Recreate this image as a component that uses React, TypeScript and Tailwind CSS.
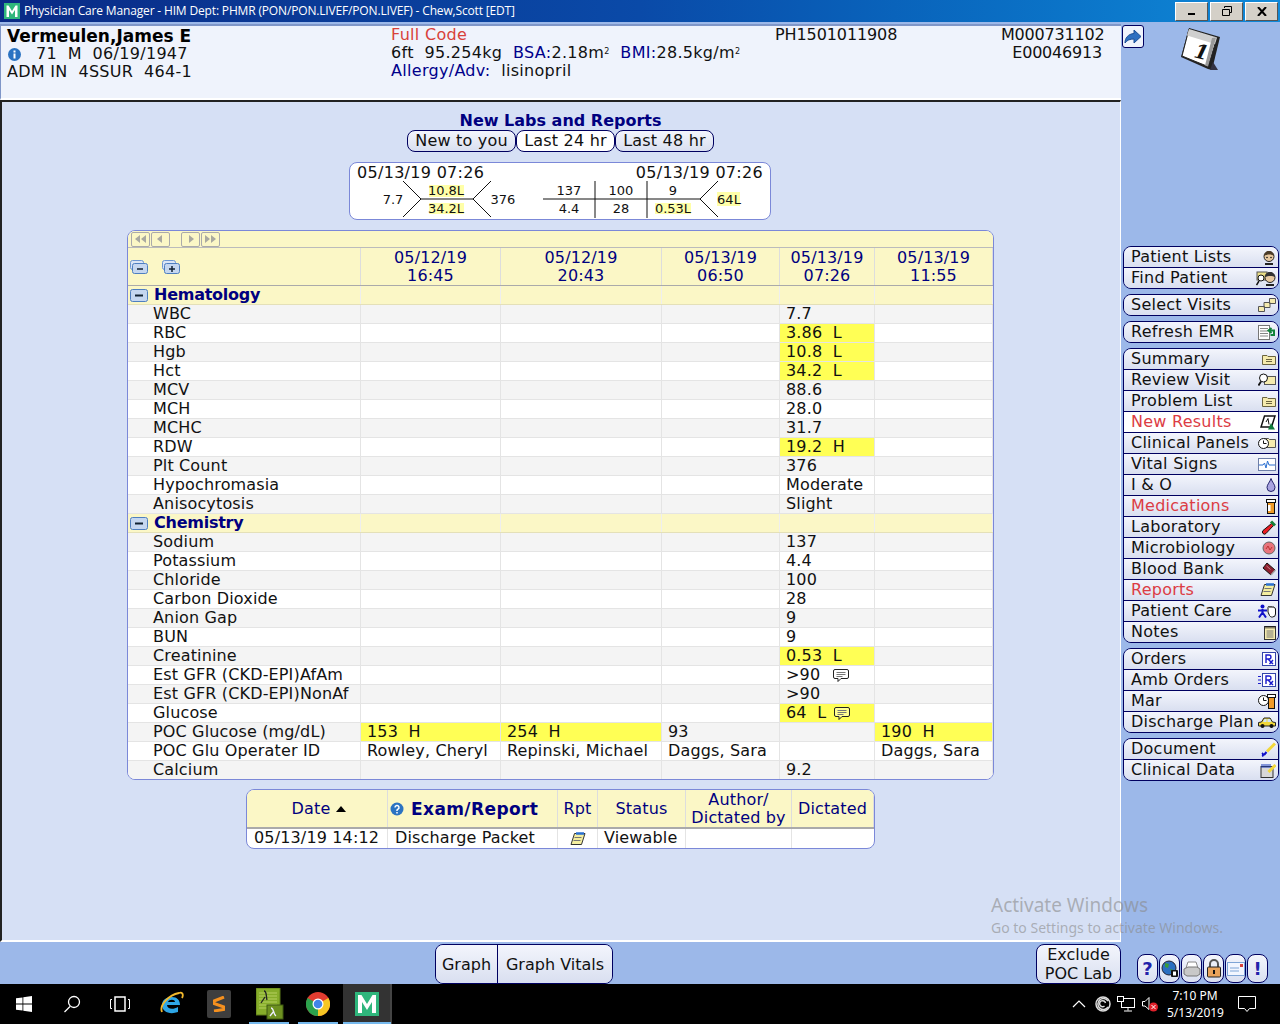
import React from "react"

const ui = { fontFamily: '"DejaVu Sans", Verdana, sans-serif' }

type Cell = { t: string; hl?: boolean; note?: boolean }
type Row = { label: string; cells?: Record<number, Cell>; section?: boolean }

const v = (t: string, hl = false, note = false): Cell => ({ t, hl, note })

const rows: Row[] = [
    { label: "Hematology", section: true },
    { label: "WBC", cells: { 3: v("7.7") } },
    { label: "RBC", cells: { 3: v("3.86  L", true) } },
    { label: "Hgb", cells: { 3: v("10.8  L", true) } },
    { label: "Hct", cells: { 3: v("34.2  L", true) } },
    { label: "MCV", cells: { 3: v("88.6") } },
    { label: "MCH", cells: { 3: v("28.0") } },
    { label: "MCHC", cells: { 3: v("31.7") } },
    { label: "RDW", cells: { 3: v("19.2  H", true) } },
    { label: "Plt Count", cells: { 3: v("376") } },
    { label: "Hypochromasia", cells: { 3: v("Moderate") } },
    { label: "Anisocytosis", cells: { 3: v("Slight") } },
    { label: "Chemistry", section: true },
    { label: "Sodium", cells: { 3: v("137") } },
    { label: "Potassium", cells: { 3: v("4.4") } },
    { label: "Chloride", cells: { 3: v("100") } },
    { label: "Carbon Dioxide", cells: { 3: v("28") } },
    { label: "Anion Gap", cells: { 3: v("9") } },
    { label: "BUN", cells: { 3: v("9") } },
    { label: "Creatinine", cells: { 3: v("0.53  L", true) } },
    { label: "Est GFR (CKD-EPI)AfAm", cells: { 3: v(">90", false, true) } },
    { label: "Est GFR (CKD-EPI)NonAf", cells: { 3: v(">90") } },
    { label: "Glucose", cells: { 3: v("64  L", true, true) } },
    { label: "POC Glucose (mg/dL)", cells: { 0: v("153  H", true), 1: v("254  H", true), 2: v("93"), 4: v("190  H", true) } },
    { label: "POC Glu Operater ID", cells: { 0: v("Rowley, Cheryl"), 1: v("Repinski, Michael"), 2: v("Daggs, Sara"), 4: v("Daggs, Sara") } },
    { label: "Calcium", cells: { 3: v("9.2") } },
]

const colClass = ["w-[140px]", "w-[161px]", "w-[118px]", "w-[95px]", "w-[118px]"]

const heads = [
    ["05/12/19", "16:45"],
    ["05/12/19", "20:43"],
    ["05/13/19", "06:50"],
    ["05/13/19", "07:26"],
    ["05/13/19", "11:55"],
]

const Note = ({ near }: { near?: boolean }) => (
    <svg width="18" height="15" viewBox="0 0 18 15" className={`shrink-0 ${near ? "ml-[7px]" : "ml-[12px]"}`}>
        <path d="M3 1.500h12a1.500 1.500 0 0 1 1.500 1.500v6a1.500 1.500 0 0 1-1.500 1.500H9L6 13.500v-3H3A1.500 1.500 0 0 1 1.500 9V3A1.500 1.500 0 0 1 3 1.500z" fill="#fff" fillOpacity="0.35" stroke="#222" />
        <path d="M4.500 4.500h9M4.500 6.500h9M4.500 8.500h6" stroke="#777" />
    </svg>
)

const Folder = () => (
    <svg width="14" height="12" viewBox="0 0 14 12">
        <path d="M.5 2.500h4.500l1 1h7.500v8H.5z" fill="#f5ebae" stroke="#6b6440" />
        <path d="M4 6.500h6M4 8.500h6" stroke="#6b6440" />
    </svg>
)

const Report = () => (
    <svg width="16" height="14" viewBox="0 0 16 14">
        <path d="M4.500 1.500h10.500l-3.500 11H1z" fill="#f4eea0" stroke="#333" />
        <path d="M6 1.500h8" stroke="#2a6fd0" strokeWidth="2.500" />
        <path d="M4.500 5.500h7M3.500 8.500h7" stroke="#777" />
    </svg>
)

const sideIcons: Record<string, React.ReactNode> = {
    person: (
        <svg width="14" height="15" viewBox="0 0 14 15">
            <circle cx="7" cy="6.500" r="5" fill="#e8c9a0" stroke="#222" />
            <path d="M2 6a5 5 0 0 1 10 0c-2-2-7-2-10 0z" fill="#4c3c28" />
            <circle cx="5" cy="7.500" r=".8" fill="#111" />
            <circle cx="9" cy="7.500" r=".8" fill="#111" />
            <path d="M3 14h8" stroke="#222" strokeWidth="2" />
        </svg>
    ),
    find: (
        <svg width="20" height="15" viewBox="0 0 20 15">
            <rect x="1" y="1" width="10" height="8" fill="#e9dd86" stroke="#555" />
            <circle cx="5" cy="7" r="3" fill="#fff" stroke="#111" />
            <path d="M3 10l-2.500 4" stroke="#111" strokeWidth="1.500" />
            <circle cx="14" cy="6.500" r="5" fill="#e8c9a0" stroke="#222" />
            <path d="M9 6a5 5 0 0 1 10 0c-2-1.500-7-1.500-10 0z" fill="#333" />
            <path d="M10 14h8" stroke="#222" strokeWidth="2" />
        </svg>
    ),
    visits: (
        <svg width="18" height="14" viewBox="0 0 18 14">
            <path d="M.5 8.500h6v5h-6zM6 4.500h6v5H6zM11.500 .5h6v5h-6z" fill="#f5ebae" stroke="#555" />
        </svg>
    ),
    refresh: (
        <svg width="18" height="15" viewBox="0 0 18 15">
            <rect x=".5" y=".5" width="11" height="14" fill="#fff" stroke="#777" />
            <path d="M2 3.500h8M2 6h8M2 8.500h8M2 11h8" stroke="#888" />
            <path d="M11 5.500h5v4.500h-3.500M13.500 3l-3 2.500 3 2.500" fill="none" stroke="#12843a" strokeWidth="2" />
        </svg>
    ),
    folder: <Folder />,
    review: (
        <svg width="18" height="14" viewBox="0 0 18 14">
            <rect x="6.500" y="3.500" width="11" height="8" fill="#f5ebae" stroke="#555" />
            <circle cx="5.500" cy="5" r="4" fill="#fff" stroke="#111" />
            <path d="M3 8.500l-2.500 4" stroke="#111" strokeWidth="1.800" />
        </svg>
    ),
    newres: (
        <svg width="16" height="15" viewBox="0 0 16 15">
            <path d="M4.500 1h10.500l-3.500 11H1z" fill="#fff" stroke="#111" strokeWidth="1.500" />
            <path d="M6 7l2-3.500 1 6" stroke="#111" fill="none" />
            <path d="M11 8l4 6.500H8z" fill="#0f7a3a" />
        </svg>
    ),
    panels: (
        <svg width="18" height="14" viewBox="0 0 18 14">
            <path d="M6.500 2.500h4l1 1h6v8h-11z" fill="#f5ebae" stroke="#555" />
            <circle cx="5.500" cy="7.500" r="5" fill="#fff" stroke="#111" />
            <path d="M5.500 4.500v3h3" fill="none" stroke="#111" />
        </svg>
    ),
    vitals: (
        <svg width="18" height="13" viewBox="0 0 18 13">
            <rect x=".5" y=".5" width="17" height="12" fill="#fff" stroke="#6d7ea8" />
            <path d="M1 7h4l1.500-2 1.500 5 1.500-7 1.500 4h6" fill="none" stroke="#2a6fd0" />
        </svg>
    ),
    drop: (
        <svg width="10" height="14" viewBox="0 0 10 14">
            <path d="M5 .5C6 4 9 6.500 9 9.500a4 4 0 0 1-8 0C1 6.500 4 4 5 .5z" fill="#a9a4e0" stroke="#22226a" />
        </svg>
    ),
    meds: (
        <svg width="10" height="15" viewBox="0 0 10 15">
            <rect x=".5" y=".5" width="9" height="3" fill="#fff" stroke="#111" />
            <rect x="1.500" y="3.500" width="7" height="11" fill="#f09a28" stroke="#111" />
            <rect x="2" y="6" width="2.500" height="6" fill="#fff" />
        </svg>
    ),
    lab: (
        <svg width="14" height="15" viewBox="0 0 14 15">
            <path d="M9.500 3.500l2 2-7.500 8a2 2 0 0 1-3-3z" fill="#ea1c24" stroke="#111" />
            <path d="M9 1.500l4 4" stroke="#16803a" strokeWidth="3" />
        </svg>
    ),
    micro: (
        <svg width="14" height="14" viewBox="0 0 14 14">
            <circle cx="7" cy="7" r="6" fill="#e9747c" stroke="#666" />
            <path d="M4 8l2-3 2 4 2-3" fill="none" stroke="#b33" />
        </svg>
    ),
    blood: (
        <svg width="14" height="14" viewBox="0 0 14 14">
            <path d="M5 1l8 7-4 5-8-7z" fill="#8e1f2e" stroke="#111" />
            <path d="M4.500 4l4 3.500" stroke="#c9808a" />
            <path d="M9 13l4.500-5" stroke="#aaa" strokeWidth="1.500" />
        </svg>
    ),
    report: <Report />,
    care: (
        <svg width="18" height="14" viewBox="0 0 18 14">
            <circle cx="4.500" cy="2.500" r="2" fill="#1010c8" />
            <path d="M0 6.500h9M4.500 5v4M4.500 8.500l-3.500 5M4.500 8.500l3.500 5" stroke="#1010c8" strokeWidth="2" />
            <path d="M10 8V3.500a1 1 0 0 1 2 0a1 1 0 0 1 2 0a1 1 0 0 1 2 0.500a1 1 0 0 1 1.500 .5V10a3 3 0 0 1-3 3h-1a3 3 0 0 1-2-1.500z" fill="#fff" stroke="#111" />
        </svg>
    ),
    notes: (
        <svg width="12" height="15" viewBox="0 0 12 15">
            <rect x=".5" y="1.500" width="11" height="13" fill="#f5ebae" stroke="#333" />
            <path d="M2 1v2.500M4 1v2.500M6 1v2.500M8 1v2.500M10 1v2.500" stroke="#111" />
            <path d="M2.500 6h7M2.500 8h7M2.500 10h7M2.500 12h7" stroke="#777" />
        </svg>
    ),
    rx: (
        <svg width="14" height="14" viewBox="0 0 14 14">
            <rect x=".5" y=".5" width="13" height="13" fill="#fff" stroke="#3344aa" />
            <path d="M4 11V3h3a2 2 0 0 1 0 4H4M6 7l5 5M11 8l-3.500 4" fill="none" stroke="#1a1acc" strokeWidth="1.400" />
        </svg>
    ),
    amb: (
        <svg width="18" height="14" viewBox="0 0 18 14">
            <path d="M0 3.500h3M0 7h3M0 10.500h3" stroke="#1a1acc" />
            <rect x="4.500" y=".5" width="13" height="13" fill="#fff" stroke="#3344aa" />
            <path d="M8 11V3h3a2 2 0 0 1 0 4H8M10 7l5 5M15 8l-3.500 4" fill="none" stroke="#1a1acc" strokeWidth="1.400" />
        </svg>
    ),
    mar: (
        <svg width="18" height="15" viewBox="0 0 18 15">
            <circle cx="5.500" cy="6.500" r="5" fill="#fff" stroke="#111" />
            <path d="M5.500 3.500v3h3" fill="none" stroke="#111" />
            <rect x="9.500" y=".5" width="8" height="3" fill="#fff" stroke="#111" />
            <rect x="10.500" y="3.500" width="6" height="11" fill="#f09a28" stroke="#111" />
        </svg>
    ),
    car: (
        <svg width="18" height="13" viewBox="0 0 18 13">
            <path d="M.5 6.500l3-.5 2.500-4h6l2.500 4 3 .5v3.500h-17z" fill="#f2d83a" stroke="#222" />
            <path d="M6.500 3h2v3h-3.500zM9.500 3h2.500l1.500 3h-4z" fill="#cfe4f5" />
            <circle cx="4.500" cy="10" r="2" fill="#111" />
            <circle cx="13.500" cy="10" r="2" fill="#111" />
        </svg>
    ),
    pen: (
        <svg width="15" height="15" viewBox="0 0 15 15">
            <path d="M14 1.500l-8 8" stroke="#f2d83a" strokeWidth="3" />
            <path d="M5.500 10L3 13M1 11c1.500 1 1.500 2.500 0 3" stroke="#1010c8" strokeWidth="2" fill="none" />
        </svg>
    ),
    data: (
        <svg width="16" height="15" viewBox="0 0 16 15">
            <rect x="1" y="3.500" width="12" height="11" fill="#d8d8d8" stroke="#333" />
            <path d="M2 1v4M4 1v4M6 1v4M8 1v4M10 1v4" stroke="#1a3cbb" />
            <path d="M15.500 2l-7 7" stroke="#f2d83a" strokeWidth="3" />
        </svg>
    ),
}

const navGroups: { t: string; i: string; red?: boolean; active?: boolean }[][] = [
    [{ t: "Patient Lists", i: "person" }, { t: "Find Patient", i: "find" }],
    [{ t: "Select Visits", i: "visits" }],
    [{ t: "Refresh EMR", i: "refresh" }],
    [
        { t: "Summary", i: "folder" },
        { t: "Review Visit", i: "review" },
        { t: "Problem List", i: "folder" },
        { t: "New Results", i: "newres", red: true, active: true },
        { t: "Clinical Panels", i: "panels" },
        { t: "Vital Signs", i: "vitals" },
        { t: "I & O", i: "drop" },
        { t: "Medications", i: "meds", red: true },
        { t: "Laboratory", i: "lab" },
        { t: "Microbiology", i: "micro" },
        { t: "Blood Bank", i: "blood" },
        { t: "Reports", i: "report", red: true },
        { t: "Patient Care", i: "care" },
        { t: "Notes", i: "notes" },
    ],
    [
        { t: "Orders", i: "rx" },
        { t: "Amb Orders", i: "amb" },
        { t: "Mar", i: "mar" },
        { t: "Discharge Plan", i: "car" },
    ],
    [{ t: "Document", i: "pen" }, { t: "Clinical Data", i: "data" }],
]

const btnBg = "bg-gradient-to-b from-[#f3f5fc] to-[#d9dff0]"

const TitleBar = () => (
    <div className="h-[22px] flex items-center bg-gradient-to-r from-[#0a2a86] via-[#0a4aa8] to-[#1089d8] shrink-0">
        <svg width="16" height="16" viewBox="0 0 16 16" className="ml-[4px]">
            <rect width="16" height="16" fill="#2fb67c" />
            <path d="M2.500 14V2.500h2L8 8l3.500-5.500h2V14h-2.500V7L8 11.500 5 7v7z" fill="#fff" />
        </svg>
        <span className="ml-[4px] text-[12px] text-white tracking-[-0.16px]" style={{ fontFamily: '"Open Sans", sans-serif' }}>
            Physician Care Manager - HIM Dept: PHMR (PON/PON.LIVEF/PON.LIVEF) - Chew,Scott [EDT]
        </span>
        <div className="ml-auto mr-[2px] flex gap-[2px]">
            {["min", "max", "close"].map(k => (
                <div key={k} className="w-[33px] h-[19px] bg-[#d4d0c8] border border-t-white border-l-white border-r-[#555] border-b-[#555] flex items-center justify-center">
                    {k === "min" && <div className="w-[7px] h-[2px] bg-black mt-[6px]" />}
                    {k === "max" && (
                        <svg width="12" height="12" viewBox="0 0 12 12">
                            <path d="M3.500 3V1.500h7v6H8M1.500 4.500h7v6h-7z" fill="none" stroke="#000" />
                        </svg>
                    )}
                    {k === "close" && (
                        <svg width="10" height="9" viewBox="0 0 10 9">
                            <path d="M1 0l8 9M9 0l-8 9" stroke="#000" strokeWidth="2" />
                        </svg>
                    )}
                </div>
            ))}
        </div>
    </div>
)

const PatientHeader = () => (
    <div className="h-[76px] shrink-0 bg-[#eff3fc] border-t-2 border-[#7f96c8] border-b-2 border-b-white border-l border-l-[#7f96c8] flex text-[16px] leading-[18px] text-[#111] box-border">
        <div className="w-[390px] pl-[6px] pt-[1px] tracking-[0.3px]">
            <div className="font-bold text-[#000] text-[17px] tracking-normal leading-[18px]">Vermeulen,James E</div>
            <div className="flex items-center whitespace-pre">
                <svg width="15" height="15" viewBox="0 0 15 15" className="mr-[14px]">
                    <circle cx="7.500" cy="7.500" r="6.500" fill="#2b73c2" />
                    <rect x="6.500" y="6.500" width="2" height="5" fill="#fff" />
                    <rect x="6.500" y="3.500" width="2" height="2" fill="#fff" />
                </svg>
                71  M  06/19/1947
            </div>
            <div className="whitespace-pre">ADM IN  4SSUR  464-1</div>
        </div>
        <div className="w-[384px] tracking-[0.3px]">
            <div className="text-[#d8413a]">Full Code</div>
            <div className="whitespace-pre">
                6ft  95.254kg  <span className="text-[#00008b]">BSA:</span>2.18m<sup className="text-[8px]">2</sup>  <span className="text-[#00008b]">BMI:</span>28.5kg/m<sup className="text-[8px]">2</sup>
            </div>
            <div className="whitespace-pre"><span className="text-[#00008b]">Allergy/Adv:</span>  lisinopril</div>
        </div>
        <div className="w-[226px] tracking-[-0.1px]">PH1501011908</div>
        <div className="w-[101px] text-right tracking-[-0.2px]">
            <div>M000731102</div>
            <div>E00046913</div>
        </div>
    </div>
)

const Fishbone = () => (
    <svg width="420" height="38" viewBox="0 0 420 38" className="block" fontSize="13" fontFamily='"DejaVu Sans", sans-serif' fill="#111" textAnchor="middle">
        <rect x="79" y="4" width="35" height="12" fill="#ffffa8" />
        <rect x="79" y="22" width="35" height="11" fill="#ffffa8" />
        <rect x="305" y="22" width="36" height="11" fill="#ffffa8" />
        <rect x="367" y="11" width="23" height="14" fill="#ffffa8" />
        <path d="M53 0l18 18M53 36l18-18M71 18h52M123 18l18-18M123 18l18 18" fill="none" stroke="#111" />
        <path d="M193 18h157M245 0v37M297 0v37M350 18l18-18M350 18l18 18" fill="none" stroke="#111" />
        <text x="43" y="23">7.7</text>
        <text x="96" y="14">10.8L</text>
        <text x="96" y="32">34.2L</text>
        <text x="153" y="23">376</text>
        <text x="219" y="14">137</text>
        <text x="219" y="32">4.4</text>
        <text x="271" y="14">100</text>
        <text x="271" y="32">28</text>
        <text x="323" y="14">9</text>
        <text x="323" y="32">0.53L</text>
        <text x="379" y="23">64L</text>
    </svg>
)

const LabsGrid = () => (
    <div className="ml-[125px] w-[867px] mt-[10px] border border-[#7b88d8] rounded-lg overflow-hidden bg-white text-[16px] text-[#111] tracking-[0.15px]">
        <div className="h-[17px] bg-[#fbf7c6] border-b border-[#bbb] flex items-center pl-[3px] gap-[1px]">
            {["M8 2L3 6l5 4zM14 2L9 6l5 4z", "M10 2L5 6l5 4z"].map(d => (
                <svg key={d} width="17" height="13" viewBox="0 0 17 13" className="border border-[#aaa] box-content rounded-[2px]"><path d={d} fill="#a9a9a0" /></svg>
            ))}
            <div className="w-[9px]" />
            {["M7 2l5 4-5 4z", "M3 2l5 4-5 4zM9 2l5 4-5 4z"].map(d => (
                <svg key={d} width="17" height="13" viewBox="0 0 17 13" className="border border-[#aaa] box-content rounded-[2px]"><path d={d} fill="#a9a9a0" /></svg>
            ))}
        </div>
        <div className="flex h-[38px] bg-[#fbf7c6] border-b border-[#aaa] text-[#000080] leading-[18px]">
            <div className="w-[233px] border-r border-[#ddd] flex items-center gap-[12px] pl-[1px] pt-[2px]">
                {["M5 9h6", "M5 9h6M8 6v6"].map(d => (
                    <svg key={d} width="20" height="15" viewBox="0 0 20 15">
                        <rect x="1.500" y=".5" width="13" height="9" rx="2" fill="#dbe6f6" stroke="#6d97d2" />
                        <rect x="3.500" y="3.500" width="15" height="10" rx="2" fill="#c5d7f0" stroke="#4e7fc0" />
                        <path d={d} transform="translate(3,0)" stroke="#123" strokeWidth="1.500" />
                    </svg>
                ))}
            </div>
            {heads.map((h, i) => (
                <div key={i} className={`${colClass[i]} shrink-0 border-r border-[#ddd] text-center pt-[1px]`}>
                    <div>{h[0]}</div>
                    <div>{h[1]}</div>
                </div>
            ))}
        </div>
        {rows.map((r, idx) => {
            if (r.section) {
                return (
                    <div key={r.label} className="flex h-[19px] bg-[#fbf7c6] border-b border-[#e4e0b8]">
                        <div className="w-[233px] flex items-center border-r border-[#eee] pl-[2px] font-bold text-[#000080] text-[16px] tracking-[-0.25px]">
                            <svg width="18" height="13" viewBox="0 0 18 13" className="mr-[6px]">
                                <rect x=".5" y=".5" width="17" height="12" rx="2" fill="#c5d7f0" stroke="#4e7fc0" />
                                <path d="M5 6.500h8" stroke="#123" strokeWidth="2" />
                            </svg>
                            {r.label}
                        </div>
                        {colClass.map((c, i) => <div key={i} className={`${c} shrink-0 border-r border-[#eee]`} />)}
                    </div>
                )
            }
            const prevSection = rows.slice(0, idx).reverse().findIndex(x => x.section)
            const odd = prevSection % 2 === 0
            return (
                <div key={r.label} className={`flex h-[19px] last:h-[18px] leading-[18px] border-b border-[#e4e4e4] last:border-b-0 ${odd ? "bg-[#f4f4f4]" : "bg-white"}`}>
                    <div className="w-[233px] pl-[25px] border-r border-[#e4e4e4] whitespace-nowrap">{r.label}</div>
                    {colClass.map((c, i) => {
                        const cell = r.cells?.[i]
                        return (
                            <div key={i} className={`${c} shrink-0 border-r border-[#e4e4e4] pl-[6px] flex items-center whitespace-pre ${cell?.hl ? "bg-[#ffff55]" : ""}`}>
                                {cell?.t}
                                {cell?.note && <Note near={cell.hl} />}
                            </div>
                        )
                    })}
                </div>
            )
        })}
    </div>
)

const reportHead = [
    { w: "w-[141px]", t: "Date" },
    { w: "w-[170px]", t: "" },
    { w: "w-[40px]", t: "Rpt" },
    { w: "w-[88px]", t: "Status" },
    { w: "w-[106px]", t: "Author/ Dictated by" },
    { w: "w-[82px]", t: "Dictated" },
]

const ReportsTable = () => (
    <div className="ml-[244px] w-[629px] mt-[9px] border border-[#7b88d8] rounded-lg overflow-hidden bg-white text-[16px] tracking-[0.15px]">
        <div className="flex h-[39px] bg-[#fbf7c6] border-b-2 border-[#aaa] text-[#000080] leading-[18px] text-center">
            {reportHead.map((h, i) => (
                <div key={i} className={`${h.w} border-r border-[#ddd] flex items-center ${i === 1 ? "justify-start pl-[2px]" : "justify-center"}`}>
                    {i === 0 && <span className="flex items-center pl-[4px]">Date<svg width="10" height="6" viewBox="0 0 10 6" className="ml-[6px]"><path d="M5 0l5 6H0z" fill="#000" /></svg></span>}
                    {i === 1 && (
                        <span className="flex items-center font-bold text-[17px] tracking-[0.4px]">
                            <svg width="14" height="14" viewBox="0 0 14 14" className="mr-[7px]"><circle cx="7" cy="7" r="6.500" fill="#2b73c2" /><path d="M5 5.500a2 2 0 1 1 3 1.700L7 8v1M7 10v1.500" fill="none" stroke="#fff" strokeWidth="1.500" /></svg>
                            Exam/Report
                        </span>
                    )}
                    {i > 1 && <span>{h.t}</span>}
                </div>
            ))}
        </div>
        <div className="flex h-[19px] leading-[18px] text-[#111]">
            <div className="w-[141px] pl-[7px] border-r border-[#e4e4e4] whitespace-nowrap">05/13/19 14:12</div>
            <div className="w-[170px] pl-[7px] border-r border-[#e4e4e4]">Discharge Packet</div>
            <div className="w-[40px] border-r border-[#e4e4e4] flex items-center justify-center"><Report /></div>
            <div className="w-[88px] pl-[6px] border-r border-[#e4e4e4]">Viewable</div>
            <div className="w-[106px] border-r border-[#e4e4e4]" />
            <div className="w-[82px]" />
        </div>
    </div>
)

const MainPanel = () => (
    <div className="flex-1 min-h-0 bg-[#d6e0f5] border-t-2 border-t-[#222] border-l-2 border-l-[#222] border-r border-r-white border-b-2 border-b-white box-border">
        <h1 className="text-center text-[16px] font-bold text-[#000080] leading-[19px] mt-[9px] ml-[-1px]">New Labs and Reports</h1>
        <div className="flex justify-center ml-[-1px] h-[22px]">
            {["New to you", "Last 24 hr", "Last 48 hr"].map((t, i) => (
                <div key={t} className={`w-[99px] first:w-[109px] border border-[#000060] rounded-lg flex items-center justify-center text-[16px] text-[#111] tracking-[0.2px] ${i === 1 ? "bg-white" : btnBg}`}>{t}</div>
            ))}
        </div>
        <div className="ml-[347px] w-[422px] h-[58px] mt-[10px] border border-[#7b88d8] rounded-lg bg-white overflow-hidden">
            <div className="flex justify-between px-[7px] text-[16px] leading-[19px] h-[18px] text-[#111] tracking-[0.3px]">
                <span>05/13/19 07:26</span>
                <span>05/13/19 07:26</span>
            </div>
            <Fishbone />
        </div>
        <LabsGrid />
        <ReportsTable />
    </div>
)

const Sidebar = () => (
    <div className="w-[159px] shrink-0 bg-[#9cb8e9] pt-[1px]">
        <div className="h-[221px] flex">
            <div className="w-[22px] h-[23px] ml-[1px] border border-[#000060] rounded-[3px] bg-[#eff3fc] flex items-center justify-center">
                <svg width="18" height="16" viewBox="0 0 18 16"><path d="M10 1l7 6.500-7 6.500v-4C6 10 3 11 1 14c0-5 3-9 9-9.500z" fill="#2e6fc0" stroke="#1d4f96" /></svg>
            </div>
            <svg width="42" height="46" viewBox="0 0 42 46" className="ml-[36px] mt-[1px]" fontFamily='"DejaVu Serif", serif'>
                <path d="M9 2l31 9-8 33-4-1-27-12z" fill="#222" />
                <path d="M33 36l5 8h-8z" fill="#334" />
                <path d="M9 3l28 8.500-9 29L2 30z" fill="#fff" stroke="#222" />
                <path d="M9 3l28 8.500-2 6.500L7 9.500z" fill="#cfcfcf" />
                <path d="M32 12l4-.5-8 29-3-1z" fill="#999" />
                <text x="13" y="31" fontSize="20" fontWeight="bold" fontStyle="italic" fill="#111" transform="rotate(14 13 31)">1</text>
            </svg>
        </div>
        <div className="flex flex-col gap-[5px] ml-[2px] w-[156px] text-[16px] tracking-[0.25px]">
            {navGroups.map((g, i) => (
                <div key={i} className="border border-[#000060] rounded-lg overflow-hidden">
                    {g.map(n => (
                        <div key={n.t} className={`h-[21px] last:h-[20px] flex items-center justify-between pl-[7px] pr-[2px] border-b border-[#000060] last:border-b-0 ${n.active ? "bg-white" : btnBg}`}>
                            <span className={`whitespace-nowrap ${n.red ? "text-[#dc3c44]" : "text-[#111]"}`}>{n.t}</span>
                            {sideIcons[n.i]}
                        </div>
                    ))}
                </div>
            ))}
        </div>
    </div>
)

const tools: React.ReactNode[] = [
    <span key="q" className="font-bold text-[18px] text-[#2222aa]">?</span>,
    <svg key="g" width="18" height="18" viewBox="0 0 18 18"><circle cx="8" cy="8" r="7" fill="#2b6fc0" stroke="#223" /><path d="M4 3l4 1-1 4-3-1zM9 9l4 1-2 4z" fill="#3a9a3a" /><rect x="10" y="10" width="7" height="7" rx="1" fill="#111" /><path d="M12 11.500h3v4h-3z" fill="#fff" /></svg>,
    <svg key="p" width="18" height="16" viewBox="0 0 18 16"><path d="M5 1l8 0 2 6H3z" fill="#fff" stroke="#888" /><path d="M1 8l4-2h9l3 2v5l-3 2H4l-3-2z" fill="#c8c8c8" stroke="#777" /></svg>,
    <svg key="l" width="16" height="19" viewBox="0 0 16 19"><path d="M4 8V5a4 4 0 0 1 8 0v3" fill="none" stroke="#555" strokeWidth="2" /><rect x="1.500" y="8" width="13" height="10" rx="1" fill="#e8a25a" stroke="#222" /><rect x="7" y="11" width="2" height="4" fill="#111" /></svg>,
    <svg key="m" width="18" height="14" viewBox="0 0 18 14"><rect x=".5" y=".5" width="17" height="13" fill="#f2f6ff" stroke="#7fa5d6" /><path d="M3 6h9M3 9h9" stroke="#7fa5d6" /><rect x="13" y="2" width="3" height="3" fill="#d8413a" /></svg>,
    <span key="e" className="font-bold text-[18px] text-[#2222aa]">!</span>,
]

const BottomBar = () => (
    <div className="h-[42px] shrink-0 bg-[#9cb8e9] flex items-end text-[#111] text-[16px] leading-[19px]">
        <div className="ml-[435px] h-[40px] flex border border-[#000060] rounded-lg overflow-hidden">
            <div className={`w-[62px] flex items-center justify-center border-r border-[#000060] ${btnBg}`}>Graph</div>
            <div className={`w-[114px] flex items-center justify-center ${btnBg}`}>Graph Vitals</div>
        </div>
        <div className={`ml-[423px] w-[85px] h-[40px] border border-[#000060] rounded-lg text-center flex flex-col justify-center ${btnBg}`}>
            <span>Exclude</span>
            <span>POC Lab</span>
        </div>
        <div className="ml-[16px] flex gap-[1px] mb-[1px]">
            {tools.map((t, i) => (
                <div key={i} className={`w-[21px] h-[29px] border border-[#000060] rounded-lg flex items-center justify-center overflow-hidden ${btnBg}`}>{t}</div>
            ))}
        </div>
    </div>
)

const Taskbar = () => (
    <div className="h-[40px] shrink-0 bg-black flex items-center text-white relative" style={{ fontFamily: '"Noto Sans", sans-serif' }}>
        <div className="w-[48px] flex justify-center">
            <svg width="16" height="16" viewBox="0 0 16 16"><path d="M0 2.300L6.500 1.400V7.600H0zM7.300 1.300L16 0V7.600H7.300zM0 8.400H6.500V14.600L0 13.700zM7.300 8.400H16V16L7.300 14.800z" fill="#fff" /></svg>
        </div>
        <div className="w-[48px] flex justify-center">
            <svg width="18" height="18" viewBox="0 0 18 18" fill="none" stroke="#fff" strokeWidth="1.300"><circle cx="11" cy="7" r="5.500" /><path d="M7 11.500L1.500 17" /></svg>
        </div>
        <div className="w-[48px] flex justify-center">
            <svg width="20" height="16" viewBox="0 0 20 16" fill="none" stroke="#fff"><rect x="5" y="1" width="10" height="14" strokeWidth="1.500" /><path d="M2 3.500H.5v9H2M18 3.500h1.500v9H18" /></svg>
        </div>
        <div className="w-[56px] flex justify-center">
            <svg width="26" height="26" viewBox="0 0 26 26">
                <path d="M13 6c5 0 8 3 8 8H8c0 4 6 5 11 2v5c-8 3-16 0-16-7 0-5 4-8 10-8zm-4 5h7c0-3-6-3-7 0z" fill="#2ea6e6" />
                <path d="M3 21C0 14 10 4 20 2c3-1 5 1 3 5" fill="none" stroke="#f2b82c" strokeWidth="1.800" />
            </svg>
        </div>
        <div className="w-[38px] flex justify-center">
            <div className="w-[24px] h-[28px] bg-[#3e3e3e] rounded-[2px] flex items-center justify-center">
                <svg width="12" height="16" viewBox="0 0 12 16"><path d="M11 1L1 5v2.500L11 11v2.500L1 15" fill="none" stroke="#f5901e" strokeWidth="3" /></svg>
            </div>
        </div>
        <div className="w-[64px] flex justify-center">
            <svg width="28" height="32" viewBox="0 0 28 32">
                <rect x="0" y="0" width="24" height="27" fill="#86ad2a" stroke="#5c7a18" />
                <path d="M3 5h18M3 8h18M3 11h18M3 14h18M3 17h18M3 20h18" stroke="#b6d060" />
                <rect x="11" y="17" width="16" height="14" fill="#6d9020" stroke="#3f5a10" />
                <path d="M8 3c3 0 2 6 3 9M5 15l4-6" fill="none" stroke="#222" strokeWidth="1.300" />
                <path d="M15 20c3 0 2 6 5 8M14 28l4-5" fill="none" stroke="#eef" strokeWidth="1.300" />
            </svg>
        </div>
        <div className="w-[32px] flex justify-center">
            <svg width="24" height="24" viewBox="0 0 24 24">
                <circle cx="12" cy="12" r="12" fill="#e13c30" />
                <path d="M12 12L22.400 6A12 12 0 0 1 12 24z" fill="#f6c624" />
                <path d="M12 12L12 24A12 12 0 0 1 1.600 6z" fill="#2ba24c" />
                <circle cx="12" cy="12" r="5.500" fill="#fff" />
                <circle cx="12" cy="12" r="4.300" fill="#4285e8" />
            </svg>
        </div>
        <div className="ml-[9px] w-[49px] h-full bg-[#333] flex justify-center items-center border-r-2 border-[#444]">
            <svg width="24" height="24" viewBox="0 0 24 24">
                <rect width="24" height="24" fill="#2fb67c" />
                <path d="M3 21V3h3.500L12 12l5.500-9H21v18h-4V10l-5 8-5-8v11z" fill="#fff" />
            </svg>
        </div>
        <div className="absolute left-[249px] w-[40px] h-[2px] bottom-0 bg-[#76b9ed]" />
        <div className="absolute left-[298px] w-[40px] h-[2px] bottom-0 bg-[#76b9ed]" />
        <div className="absolute left-[343px] w-[48px] h-[2px] bottom-0 bg-[#76b9ed]" />

        <div className="ml-auto flex items-center">
            <svg width="14" height="8" viewBox="0 0 14 8" fill="none" stroke="#fff" strokeWidth="1.200"><path d="M1 7l6-6 6 6" /></svg>
            <svg width="16" height="16" viewBox="0 0 16 16" className="ml-[9px]" fill="none" stroke="#ddd" strokeWidth="1.500"><circle cx="8" cy="8" r="7" /><path d="M13 5a5.500 5.500 0 1 0 0 6M10.500 7a3 3 0 1 0-1 3" /></svg>
            <svg width="18" height="16" viewBox="0 0 18 16" className="ml-[6px]" fill="none" stroke="#fff"><rect x="4.500" y="2.500" width="13" height="9" /><rect x=".5" y=".5" width="6" height="5" fill="#000" /><path d="M11 11.500v3M7 15h8" /></svg>
            <svg width="18" height="16" viewBox="0 0 18 16" className="ml-[6px]"><path d="M1.500 5.500h2.500L8 1.500v12l-4-3.500H1.500z" fill="none" stroke="#fff" /><circle cx="12.500" cy="11" r="4.500" fill="#e0202a" /><path d="M10.500 9l4 4M14.500 9l-4 4" stroke="#fff" /></svg>
            <div className="w-[56px] ml-[8px] text-center text-[12px] leading-[17px]">
                <div>7:10 PM</div>
                <div>5/13/2019</div>
            </div>
            <div className="w-[48px] mr-[9px] flex justify-center">
                <svg width="18" height="17" viewBox="0 0 18 17" fill="none" stroke="#fff"><path d="M.5 .5h17v12h-6l-2.500 3-2.500-3h-6z" /></svg>
            </div>
        </div>
    </div>
)

const App = () => (
    <div className="w-[1280px] h-[1024px] overflow-hidden flex flex-col relative" style={ui}>
        <TitleBar />
        <div className="h-[2px] bg-[#9cb8e9] shrink-0" />
        <div className="flex flex-1 min-h-0">
            <div className="w-[1121px] flex flex-col">
                <PatientHeader />
                <MainPanel />
            </div>
            <Sidebar />
        </div>
        <BottomBar />
        <Taskbar />
        {/* watermark sits over the page */}
        <div className="absolute left-[991px] top-[893px] pointer-events-none text-[#8a8a8a]/60" style={{ fontFamily: '"Noto Sans", sans-serif' }}>
            <div className="text-[19px] leading-[24px] whitespace-nowrap">Activate Windows</div>
            <div className="text-[14px] leading-[22px] whitespace-nowrap">Go to Settings to activate Windows.</div>
        </div>
    </div>
)

export default App
